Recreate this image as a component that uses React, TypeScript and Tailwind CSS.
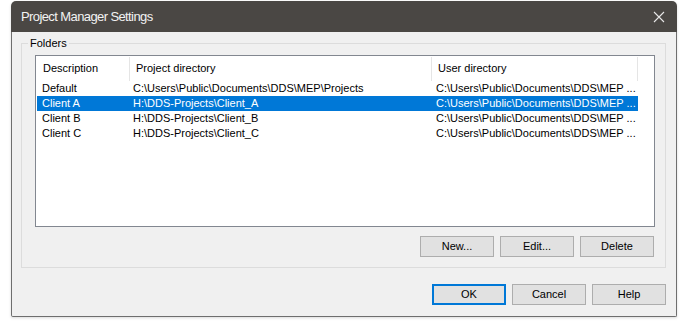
const rows = [
  {
    name: "Default",
    project: "C:\\Users\\Public\\Documents\\DDS\\MEP\\Projects",
    user: "C:\\Users\\Public\\Documents\\DDS\\MEP ...",
  },
  {
    name: "Client A",
    project: "H:\\DDS-Projects\\Client_A",
    user: "C:\\Users\\Public\\Documents\\DDS\\MEP ...",
    selected: true,
  },
  {
    name: "Client B",
    project: "H:\\DDS-Projects\\Client_B",
    user: "C:\\Users\\Public\\Documents\\DDS\\MEP ...",
  },
  {
    name: "Client C",
    project: "H:\\DDS-Projects\\Client_C",
    user: "C:\\Users\\Public\\Documents\\DDS\\MEP ...",
  },
];

const Button = ({ label, primary }: { label: string; primary?: boolean }) => (
  <button
    className={
      primary
        ? "w-[74px] h-[21px] bg-[#e1e1e1] border-2 border-[#0078d7] text-[11px] leading-none text-black"
        : "w-[74px] h-[21px] bg-[#e1e1e1] border border-[#adadad] text-[11px] leading-none text-black"
    }
  >
    {label}
  </button>
);

const App = () => {
  return (
    <div
      className="w-[690px] h-[330px] bg-white pt-[1px] pl-[11px]"
      style={{ fontFamily: '"Liberation Sans", Arial, sans-serif' }}
    >
      <div className="w-[666px] h-[316px] flex flex-col shadow-[0_1px_3px_rgba(0,0,0,0.15)] rounded-t-[5px]">
        {/* title bar */}
        <div className="h-[31px] bg-[#4a4744] rounded-t-[5px] flex items-center justify-between pl-[10px] pr-[9px]">
          <span className="text-[13px] text-[#f2f2f2] tracking-[-0.6px]">
            Project Manager Settings
          </span>
          <svg width="12" height="12" viewBox="0 0 12 12" className="mr-[3px]">
            <path d="M1 1 L11 11 M11 1 L1 11" stroke="#e8e8e8" strokeWidth="1.1" />
          </svg>
        </div>

        {/* body */}
        <div className="flex-1 bg-[#f0f0f0] border-x border-b border-[#6e6e6e] rounded-b-[2px] pt-[11px] pl-[9px] pr-[10px] flex flex-col">
          <div className="relative h-[225px] border border-[#dcdcdc] pt-[11px] pl-[13px] pr-[10px] flex flex-col">
            <span className="absolute left-[6px] top-[-8px] bg-[#f0f0f0] px-[2px] text-[11px] leading-[14px] text-black">
              Folders
            </span>
            <div className="h-[172px] bg-white border border-[#828790] pl-[1px] text-[11px] text-black">
              <div className="flex h-[25px] items-center">
                <div className="w-[93px] h-[24px] border-r border-[#e5e5e5] pl-[6px] flex items-center">
                  Description
                </div>
                <div className="w-[302px] h-[24px] border-r border-[#e5e5e5] pl-[6px] flex items-center">
                  Project directory
                </div>
                <div className="w-[206px] h-[24px] border-r border-[#e5e5e5] pl-[6px] flex items-center">
                  User directory
                </div>
              </div>
              {rows.map((r) => (
                <div
                  key={r.name}
                  className={
                    r.selected
                      ? "flex w-[601px] h-[15px] items-center bg-[#0078d7] text-white"
                      : "flex w-[601px] h-[15px] items-center"
                  }
                >
                  <div className="w-[93px] pl-[5px] whitespace-nowrap">{r.name}</div>
                  <div className="w-[302px] pl-[3px] whitespace-nowrap overflow-hidden">{r.project}</div>
                  <div className="w-[206px] pl-[4px] whitespace-nowrap overflow-hidden">{r.user}</div>
                </div>
              ))}
            </div>
            <div className="mt-[9px] flex justify-end gap-[6px] pr-[1px]">
              <Button label="New..." />
              <Button label="Edit..." />
              <Button label="Delete" />
            </div>
          </div>
          <div className="mt-[16px] flex justify-end gap-[6px]">
            <Button label="OK" primary />
            <Button label="Cancel" />
            <Button label="Help" />
          </div>
        </div>
      </div>
    </div>
  );
};

export default App;
